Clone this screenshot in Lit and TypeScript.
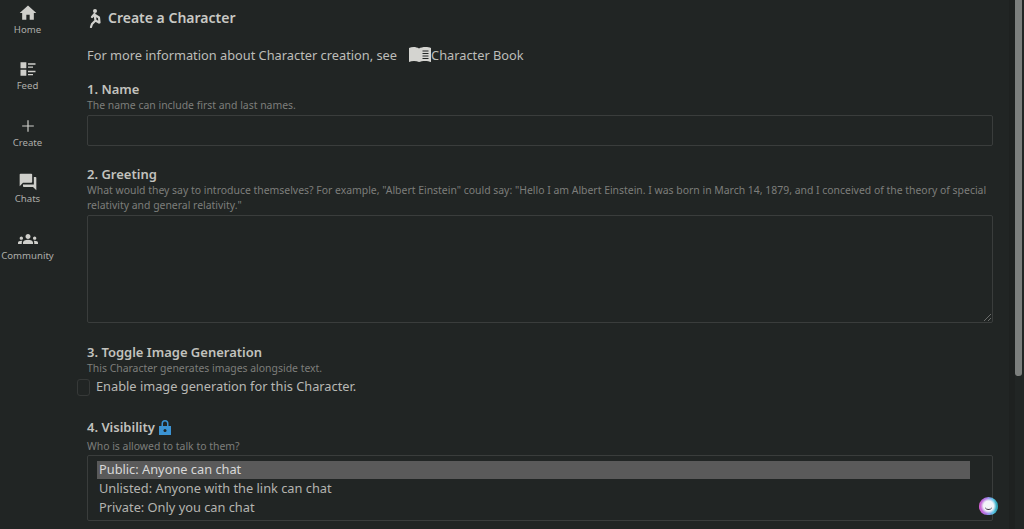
import { LitElement, html, css, svg } from "lit";
import { customElement } from "lit/decorators.js";

const nav = [
  { label: "Home", d: "M10 20v-6h4v6h5v-8h3L12 3 2 12h3v8z" },
  { label: "Feed", d: "M3 4h7v7H3zM3 13h7v7H3zM12 5h9v2h-9zM12 9h6v1.5h-6zM12 14h9v2h-9zM12 18h6v1.5h-6z" },
  { label: "Create", d: "M11.3 5h1.4v6.3H19v1.4h-6.3V19h-1.4v-6.300H5v-1.400h6.300z" },
  { label: "Chats", d: "M21 6h-2v9H6v2c0 .55.45 1 1 1h11l4 4V7c0-.55-.45-1-1-1zm-4 6V3c0-.55-.45-1-1-1H3c-.55 0-1 .45-1 1v14l4-4h10c.55 0 1-.45 1-1z" },
  { label: "Community", d: "M12 12.75c1.630 0 3.070.39 4.240.9 1.080.48 1.760 1.560 1.760 2.730V18H6v-1.610c0-1.180.68-2.260 1.760-2.730 1.170-.52 2.610-.91 4.240-.91zM4 13c1.100 0 2-.9 2-2s-.9-2-2-2-2 .9-2 2 .9 2 2 2zm1.130 1.100C4.760 14.040 4.390 14 4 14c-.99 0-1.930.21-2.780.58C.48 14.900 0 15.620 0 16.430V18h4.500v-1.610c0-.83.23-1.610.63-2.290zM20 13c1.100 0 2-.9 2-2s-.9-2-2-2-2 .9-2 2 .9 2 2 2zm4 3.430c0-.81-.48-1.530-1.220-1.850-.85-.37-1.790-.58-2.780-.58-.39 0-.76.04-1.130.1.400.68.630 1.460.630 2.290V18H24v-1.570zM12 6c1.660 0 3 1.340 3 3s-1.340 3-3 3-3-1.340-3-3 1.340-3 3-3z" },
];

@customElement("app-root")
export class AppRoot extends LitElement {
  static styles = css`
    :host {
      display: flex;
      width: 1024px;
      height: 529px;
      overflow: hidden;
      background: #212524;
      color: #c8c8c4;
      font-family: "Noto Sans", sans-serif;
    }
    .side {
      flex: 0 0 55px;
      display: flex;
      flex-direction: column;
      padding-top: 2.600px;
      gap: 17.500px;
    }
    .nav {
      display: flex;
      flex-direction: column;
      align-items: center;
      height: 39px;
      font-size: 9.600px;
      line-height: 14px;
      color: #aeaeaa;
    }
    .nav svg { width: 20px; height: 20px; fill: #cfcfcb; display: block; }
    .main {
      flex: 1;
      min-width: 0;
      padding: 0 0 0 32px;
    }
    .title {
      display: flex;
      align-items: center;
      gap: 5px;
      height: 35px;
      font-size: 14px;
      font-weight: 600;
      color: #c9c9c5;
    }
    .title svg { width: 14px; height: 20px; margin-left: 2px; }
    .info {
      display: flex;
      align-items: center;
      margin-top: 9.500px;
      height: 20px;
      font-size: 12.800px;
      color: #bdbdb9;
    }
    .info svg { width: 22px; height: 17px; margin-left: 12px; }
    .head {
      font-size: 13px;
      font-weight: 600;
      line-height: 18px;
      color: #c2c2be;
      display: flex;
      align-items: center;
    }
    .head svg { width: 14px; height: 16px; margin-left: 3px; fill: #3b93d3; }
    .hint {
      font-size: 10.430px;
      line-height: 15px;
      color: #7d7e7b;
    }
    .field { width: 906px; box-sizing: border-box; border: 1px solid #3a3d3c; border-radius: 2px; }
    .s1 { margin-top: 15.500px; }
    .in { height: 31px; margin-top: 2px; }
    .s2 { margin-top: 19px; }
    .ta { height: 108px; margin-top: 2px; position: relative; }
    .grip { position: absolute; right: 1px; bottom: 1px; width: 8px; height: 8px; }
    .s3 { margin-top: 20px; }
    .check {
      display: flex;
      align-items: center;
      margin-left: -10px;
      height: 20px;
      font-size: 12.800px;
      color: #b8b8b4;
    }
    .box {
      width: 13px;
      height: 17px;
      box-sizing: border-box;
      margin: 3px 6px 0 0;
      border: 1px solid #363938;
      border-radius: 3px;
    }
    .s4 { margin-top: 22px; }
    .s4 .hint { margin-top: 3px; }
    .list { height: 66px; margin-top: 1px; padding: 5px 22px 0 9px; font-size: 12.800px; line-height: 18.500px; color: #b4b4b0; }
    .opt { padding-left: 2px; height: 18.500px; }
    .opt.sel { background: #5a5a5a; color: #d8d8d8; height: 18px; line-height: 17px; }
    .bar {
      flex: 0 0 31px;
      position: relative;
    }
    .track { position: absolute; left: 16px; top: 0; bottom: 0; width: 6px; background: #1e2120; }
    .thumb {
      position: absolute;
      left: 22px;
      top: 0;
      width: 7px;
      height: 376px;
      background: #7c7f7d;
      border-radius: 0 0 3px 3px;
    }
    .badge {
      position: absolute;
      left: 979px;
      top: 497px;
      width: 19px;
      height: 18px;
      border-radius: 50% 50% 45% 45%;
      background: radial-gradient(circle at 50% 50%, #f2f4f8 0 38%, transparent 60%),
        linear-gradient(90deg, #d65fd0 0%, #a77be8 40%, #5ac6e6 75%, #2a9aa8 100%);
      display: flex;
      align-items: center;
      justify-content: center;
    }
    .badge i { display: block; width: 7px; height: 3px; border-bottom: 1.500px solid #3a3040; border-radius: 0 0 5px 5px; margin-top: 3px; }
  `;

  render() {
    return html`
      <nav class="side">
        ${nav.map(
          (n) => html`<div class="nav">
            <svg viewBox="0 0 24 24">${svg`<path d=${n.d}></path>`}</svg>${n.label}
          </div>`
        )}
      </nav>
      <main class="main">
        <div class="title">
          <svg viewBox="0 0 14 20"><circle cx="6" cy="3" r="2" fill="#d2d2ce"></circle><path fill="none" stroke="#d2d2ce" stroke-width="2.200" stroke-linecap="round" stroke-linejoin="round" d="M3 9l2.500-3 1 6.500-3.500 3.500-1 3M6 7l4 2.500.5 5M6.500 12.500l3.500 2"></path></svg>
          Create a Character
        </div>
        <div class="info">
          For more information about Character creation, see
          <svg viewBox="0 0 22 17"><path fill="#d4d4d0" d="M0 2c3-1.500 7-1.500 10 .5V16c-3-1.500-7-1.500-10 0z"></path><path fill="#d4d4d0" d="M10 2.500c3-2 9-2 12-.5v14c-3-1.500-9-1.500-12 0z"></path><path stroke="#222524" stroke-width="1.200" fill="none" d="M13.500 5h6M13.500 7.500h6M13.500 10h6M13.500 12.500h6"></path></svg>
          <span>Character Book</span>
        </div>
        <div class="s1">
          <div class="head">1. Name</div>
          <div class="hint">The name can include first and last names.</div>
          <div class="field in"></div>
        </div>
        <div class="s2">
          <div class="head">2. Greeting</div>
          <div class="hint">What would they say to introduce themselves? For example, "Albert Einstein" could say: "Hello I am Albert Einstein. I was born in March 14, 1879, and I conceived of the theory of special relativity and general relativity."</div>
          <div class="field ta">
            <svg class="grip" viewBox="0 0 8 8"><path d="M1 8l7-7M5 8l3-3" stroke="#6a6c6a" fill="none"></path></svg>
          </div>
        </div>
        <div class="s3">
          <div class="head">3. Toggle Image Generation</div>
          <div class="hint">This Character generates images alongside text.</div>
          <div class="check"><span class="box"></span>Enable image generation for this Character.</div>
        </div>
        <div class="s4">
          <div class="head">4. Visibility
            <svg viewBox="0 0 14 16"><path d="M3.500 7V4.500a3.500 3.500 0 0 1 7 0V7H13v9H1V7zM5 7h4V4.500a2 2 0 0 0-4 0z"></path><circle cx="7" cy="11.500" r="1.500" fill="#222524"></circle></svg>
          </div>
          <div class="hint">Who is allowed to talk to them?</div>
          <div class="field list">
            <div class="opt sel">Public: Anyone can chat</div>
            <div class="opt">Unlisted: Anyone with the link can chat</div>
            <div class="opt">Private: Only you can chat</div>
          </div>
        </div>
      </main>
      <div class="bar"><div class="track"></div><div class="thumb"></div></div>
      <div class="badge"><i></i></div>
    `;
  }
}
